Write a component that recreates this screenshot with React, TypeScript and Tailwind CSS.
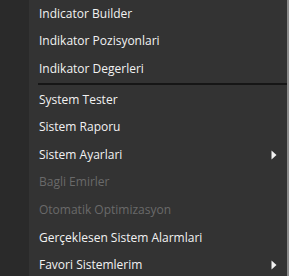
import React from "react";

type Item = { label: string; disabled?: boolean; submenu?: boolean };

const GROUPS: Item[][] = [
  [
    { label: "Indicator Builder" },
    { label: "Indikator Pozisyonlari" },
    { label: "Indikator Degerleri" },
  ],
  [
    { label: "System Tester" },
    { label: "Sistem Raporu" },
    { label: "Sistem Ayarlari", submenu: true },
    { label: "Bagli Emirler", disabled: true },
    { label: "Otomatik Optimizasyon", disabled: true },
    { label: "Gerçeklesen Sistem Alarmlari" },
    { label: "Favori Sistemlerim", submenu: true },
  ],
];

function Arrow() {
  return (
    <svg width="6" height="10" viewBox="0 0 6 10" className="mr-[10px]">
      <path d="M0.5 0.5 L5.5 5 L0.5 9.5 Z" fill="#f2f2f2" />
    </svg>
  );
}

function Row({ item }: { item: Item }) {
  return (
    <div
      className={`flex items-center justify-between h-[27.6px] pl-[10px] ${
        item.disabled ? "text-[#6a6a6a]" : "text-[#f2f2f2]"
      }`}
    >
      <span>{item.label}</span>
      {item.submenu && <Arrow />}
    </div>
  );
}

export default function App() {
  return (
    <div
      className="w-[289px] h-[276px] flex bg-[#333333] overflow-hidden text-[12px]"
      style={{ fontFamily: '"Open Sans", "Noto Sans", sans-serif' }}
    >
      {/* icon gutter */}
      <div className="w-[29px] bg-[#2a2a2a] shrink-0" />

      <div className="flex-1 flex flex-col">
        {GROUPS.map((g, i) => (
          <div key={i}>
            {i > 0 && <div className="h-[2px] bg-[#161616] ml-[9px] my-[0.5px]" />}
            {g.map((it) => (
              <Row key={it.label} item={it} />
            ))}
          </div>
        ))}
      </div>

      {/* right edge */}
      <div className="w-[2px] bg-[#8c8c8c] shrink-0" />
    </div>
  );
}
